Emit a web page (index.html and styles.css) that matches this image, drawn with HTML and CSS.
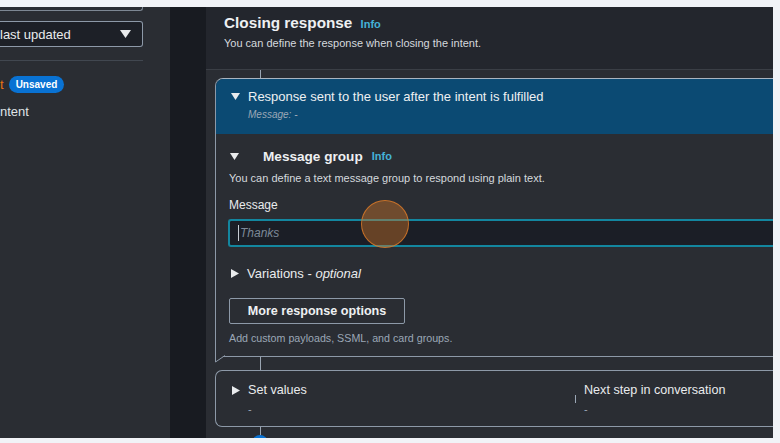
FILE: index.html
```html
<!DOCTYPE html>
<html lang="en">
<head>
<meta charset="utf-8">
<title>Closing response</title>
<link rel="stylesheet" href="styles.css">
</head>
<body>
<div class="frame">
<div class="screen">
  <aside class="sidebar">
    <div class="sb-topbox"></div>
    <div class="sb-select">
      <span>last updated</span>
      <svg class="caret" width="11" height="8" viewBox="0 0 11 8"><polygon points="0,0 11,0 5.5,8" fill="#e9ebed"/></svg>
    </div>
    <div class="sb-sep"></div>
    <div class="sb-row"><span class="orange">t</span><span class="badge">Unsaved</span></div>
    <div class="sb-row sb-row2"><span class="sb-intent">ntent</span></div>
  </aside>
  <div class="gutter"></div>
  <main class="main">
    <header class="main-head">
      <h2 class="title">Closing response <span class="info">Info</span></h2>
      <p class="subtitle">You can define the response when closing the intent.</p>
    </header>
    <section class="flow">
      <div class="connector c1"></div>
      <div class="card">
        <div class="card-head">
          <div class="head-row">
            <svg class="tri-down" width="9" height="7" viewBox="0 0 9 7"><polygon points="0,0 9,0 4.5,7" fill="#e9ebed"/></svg>
            <span class="head-title">Response sent to the user after the intent is fulfilled</span>
          </div>
          <div class="head-sub">Message: -</div>
        </div>
        <div class="card-body">
          <div class="mg-row">
            <svg class="tri-down mg-tri" width="9" height="7" viewBox="0 0 9 7"><polygon points="0,0 9,0 4.5,7" fill="#e9ebed"/></svg>
            <span class="mg-title">Message group</span>
            <span class="info">Info</span>
          </div>
          <p class="mg-desc">You can define a text message group to respond using plain text.</p>
          <label class="field-label">Message</label>
          <div class="input"><span class="caret-bar"></span><span class="placeholder">Thanks</span></div>
          <div class="var-row">
            <svg class="tri-right" width="8" height="9" viewBox="0 0 8 9"><polygon points="0,0 8,4.5 0,9" fill="#e9ebed"/></svg>
            <span>Variations - <em>optional</em></span>
          </div>
          <div class="btn">More response options</div>
          <p class="hint">Add custom payloads, SSML, and card groups.</p>
        </div>
        <svg class="tail" width="12" height="8" viewBox="0 0 12 8"><polygon points="0.5,0 0.5,7 10,0" fill="#2a2d33"/><polyline points="0.5,0 0.5,7 10,0.5" fill="none" stroke="#8d99a8" stroke-width="1"/></svg>
      </div>
      <div class="connector c2"></div>
      <div class="set-card">
        <div class="sv-col1">
          <svg class="tri-right sv-tri" width="8" height="9" viewBox="0 0 8 9"><polygon points="0,0 8,4.5 0,9" fill="#e9ebed"/></svg>
          <div class="sv-text">
            <div class="sv-title">Set values</div>
            <div class="sv-dash">-</div>
          </div>
        </div>
        <div class="sv-div"></div>
        <div class="sv-col2">
          <div class="sv-title">Next step in conversation</div>
          <div class="sv-dash">-</div>
        </div>
      </div>
      <div class="connector c3"></div>
      <div class="node-row"><span class="node"></span><span class="node-text">Add conditional branching</span></div>
    </section>
  </main>
</div>
<div class="cursor-ring"></div>
</div>
</body>
</html>
```

FILE: styles.css
```css
* { box-sizing: border-box; }
html, body { margin: 0; padding: 0; background: #f1f3f7; }
body {
  font-family: "Liberation Sans", Arial, sans-serif;
  color: #e9ebed;
}
.frame {
  position: relative;
  width: 780px;
  height: 443px;
  overflow: hidden;
  display: flex;
  flex-direction: column;
  padding: 7px 7px 5px 0;
  background: #f1f3f7;
}
.screen {
  flex: 1;
  min-height: 0;
  overflow: hidden;
  display: flex;
  background: #23262d;
}
/* sidebar */
.sidebar {
  width: 170px;
  flex: none;
  background: #2a2d33;
  padding-right: 27px;
}
.sb-topbox {
  height: 4px;
  border-bottom: 1px solid #7d8793;
  border-right: 1px solid #7d8793;
  border-bottom-right-radius: 3px;
}
.sb-select {
  margin-top: 10px;
  height: 26px;
  border: 1px solid #8d99a8;
  border-left: none;
  border-radius: 0 3px 3px 0;
  background: #1d2027;
  display: flex;
  align-items: center;
  justify-content: space-between;
  padding-right: 11px;
  font-size: 13px;
}
.sb-sep { margin-top: 13px; height: 1px; background: #414750; }
.sb-row {
  margin-top: 14px;
  height: 18px;
  display: flex;
  align-items: center;
  font-size: 13px;
}
.sb-row2 { margin-top: 9px; }
.sb-intent { color: #dfe2e6; }
.orange { color: #ec7211; }
.badge {
  margin-left: 5px;
  height: 17px;
  border-radius: 9px;
  background: #0972d3;
  color: #fff;
  font-size: 10px;
  font-weight: bold;
  padding: 0 7px;
  display: flex;
  align-items: center;
}
.gutter { width: 36px; flex: none; background: #181b21; }
/* main */
.main { flex: 1; min-width: 0; overflow: hidden; background: #23262d; }
.main-head { padding: 5px 18px 18px; }
.title {
  margin: 0;
  font-size: 15.3px;
  line-height: 22px;
  font-weight: bold;
  color: #eef0f2;
}
.info {
  font-size: 11px;
  font-weight: bold;
  color: #44b2d8;
  margin-left: 4px;
}
.subtitle {
  margin: 0;
  font-size: 11px;
  line-height: 16px;
  color: #d5d9de;
}
.flow {
  border-top: 1px solid #3a3e45;
  background: #2a2d33;
  padding-left: 9px;
  margin-right: -12px;
  height: 400px;
}
.connector { width: 1px; margin-left: 45px; background: #9aa5b2; }
.c1 { height: 8px; }
.c2 { height: 13px; }
.c3 { height: 8px; }
.card {
  position: relative;
  border: 1px solid #8d99a8;
  border-top-color: #a9b4c0;
  border-radius: 8px 0 0 0;
  background: #2a2d33;
}
.card-head {
  background: #0b4a73;
  border-radius: 7px 0 0 0;
  padding: 8px 0 12px 15px;
}
.head-row { display: flex; align-items: center; height: 18px; gap: 8px; }
.tri-down { flex: none; display: block; }
.head-title { font-size: 13px; color: #eef0f2; }
.head-sub {
  margin: 3px 0 0 17px;
  line-height: 14px;
  font-size: 10px;
  font-style: italic;
  color: #9ba7b6;
}
.card-body { padding: 12px 0 11px 13px; }
.mg-row { display: flex; align-items: center; height: 20px; }
.mg-tri { margin-left: 1px; }
.mg-title { margin-left: 24px; font-size: 13.6px; font-weight: bold; color: #eef0f2; }
.mg-row .info { margin-left: 9px; }
.mg-desc { margin: 4px 0 0; font-size: 11px; line-height: 16px; color: #d5d9de; }
.field-label { display: block; margin-top: 11px; font-size: 12px; line-height: 16px; color: #e9ebed; }
.input {
  margin: 6px 0 0 -1px;
  height: 28px;
  border: 2px solid #13869f;
  border-right: none;
  border-radius: 3px 0 0 3px;
  background: #1b1e26;
  display: flex;
  align-items: center;
  padding-left: 8px;
}
.caret-bar { width: 1px; height: 16px; background: #c6ccd3; }
.placeholder { margin-left: 1px; font-size: 12px; font-style: italic; color: #7d8998; }
.var-row { margin-top: 17px; height: 18px; display: flex; align-items: center; gap: 8px; font-size: 13px; padding-left: 2px; }
.tri-right { flex: none; display: block; }
.btn {
  margin-top: 16px;
  width: 176px;
  height: 26px;
  border: 1px solid #8d99a8;
  border-radius: 2px;
  display: flex;
  align-items: center;
  justify-content: center;
  font-size: 12.6px;
  font-weight: bold;
  color: #eef0f2;
}
.hint { margin: 7px 0 0; font-size: 10.7px; line-height: 14px; color: #9ba7b6; }
.tail { position: absolute; left: -1px; bottom: -7px; display: block; }
.set-card {
  border: 1px solid #8d99a8;
  border-radius: 7px 0 0 7px;
  border-right: none;
  height: 57px;
  display: flex;
}
.sv-col1 { width: 359px; flex: none; display: flex; padding: 10px 0 0 16px; gap: 8px; }
.sv-tri { margin-top: 5px; }
.sv-title { font-size: 12.6px; line-height: 18px; color: #e9ebed; }
.sv-dash { margin-top: 3px; font-size: 11px; line-height: 14px; color: #9ba7b6; }
.sv-div { width: 1px; height: 8px; margin-top: 24px; background: #9ba7b6; flex: none; }
.sv-col2 { padding: 10px 0 0 8px; }
.node-row { display: flex; align-items: flex-start; }
.node {
  margin-left: 37px;
  width: 16px;
  height: 16px;
  border-radius: 50%;
  background: #0972d3;
  flex: none;
}
.node-text { margin: 1px 0 0 12px; font-size: 12px; color: #539fe5; }
.cursor-ring {
  position: absolute;
  left: 361px;
  top: 200px;
  width: 48px;
  height: 48px;
  border-radius: 50%;
  background: rgba(214, 120, 40, 0.4);
  border: 1.5px solid rgba(214, 120, 40, 0.85);
}
```
